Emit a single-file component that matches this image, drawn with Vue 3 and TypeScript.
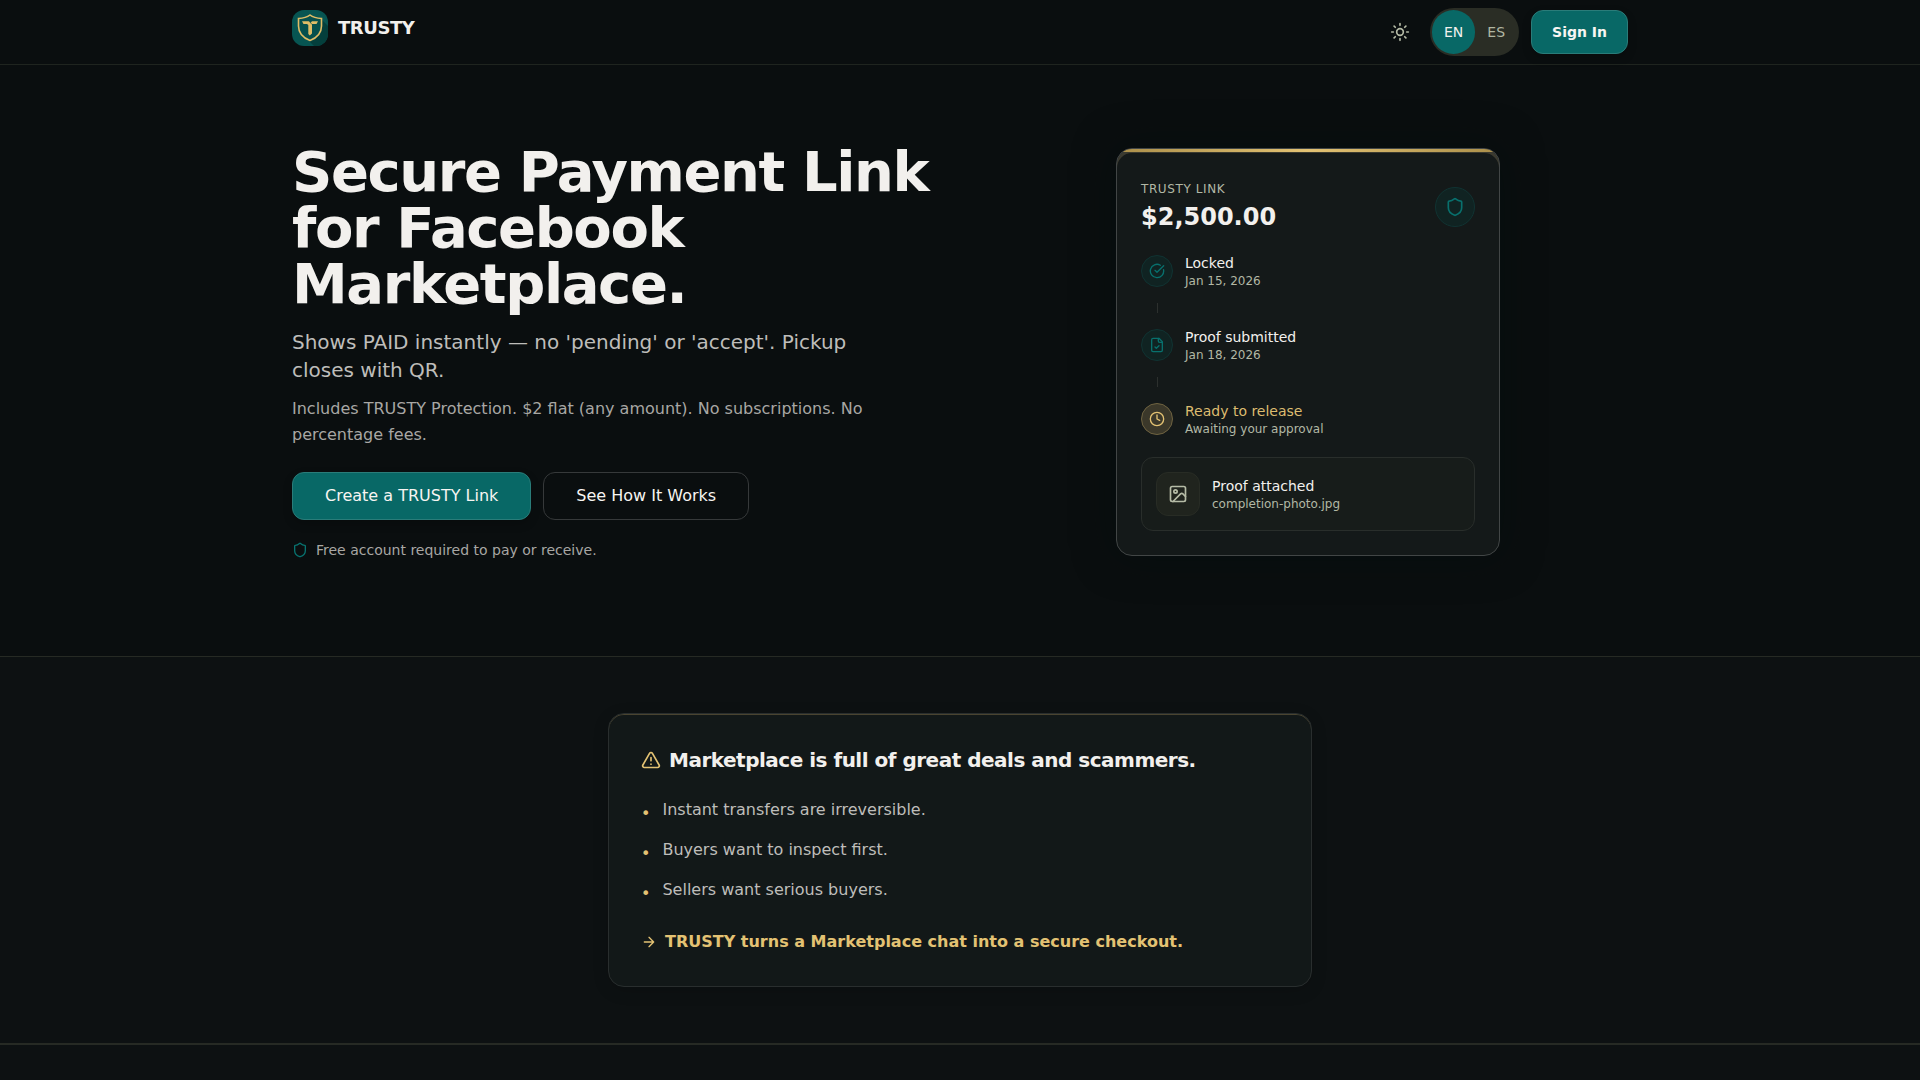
<script setup lang="ts">
import { ref } from 'vue'

type StepIcon = 'check' | 'file' | 'clock'

interface Step {
  title: string
  detail: string
  icon: StepIcon
  active?: boolean
}

const locale = ref<'EN' | 'ES'>('EN')
const locales = ['EN', 'ES'] as const

const steps: Step[] = [
  { title: 'Locked', detail: 'Jan 15, 2026', icon: 'check' },
  { title: 'Proof submitted', detail: 'Jan 18, 2026', icon: 'file' },
  { title: 'Ready to release', detail: 'Awaiting your approval', icon: 'clock', active: true },
]

const problems: string[] = [
  'Instant transfers are irreversible.',
  'Buyers want to inspect first.',
  'Sellers want serious buyers.',
]
</script>

<template>
  <div class="page">
    <header class="topbar">
      <div class="container topbar-inner">
        <a class="brand" href="#">
          <svg class="logo" viewBox="0 0 36 36" aria-hidden="true">
            <defs>
              <clipPath id="logo-clip"><rect width="36" height="36" rx="12" /></clipPath>
            </defs>
            <g clip-path="url(#logo-clip)">
              <rect width="36" height="36" fill="#075552" />
              <path d="M28 8L36 16V36H22L16 30Z" fill="#043f3c" />
            </g>
            <path d="M18 5C15 7.400 11 8.300 6.500 8.500V16C6.500 23.500 11 27.800 18 30.500C25 27.800 29.500 23.500 29.500 16V8.500C25 8.300 21 7.400 18 5Z" fill="#06504d" stroke="#dfbc66" stroke-width="1.600" />
            <path d="M10 11.200H17.200L18.600 12.700L20 11.200H26L24.500 14H20V23.500L17.800 25.500L16.300 24V15L15 14H11.500Z" fill="#dfbc66" />
            <path d="M17.200 11.200L20 14.500" stroke="#06504d" stroke-width="0.700" />
          </svg>
          <span>TRUSTY</span>
        </a>
        <div class="actions">
          <button class="theme" type="button" aria-label="Toggle theme">
            <svg class="icon i20" viewBox="0 0 24 24">
              <circle cx="12" cy="12" r="4" />
              <path d="M12 2v2M12 20v2M4.930 4.930l1.410 1.410M17.660 17.660l1.410 1.410M2 12h2M20 12h2M6.340 17.660l-1.410 1.410M19.070 4.930l-1.410 1.410" />
            </svg>
          </button>
          <div class="lang" role="group" aria-label="Language">
            <button
              v-for="code in locales"
              :key="code"
              type="button"
              :class="{ on: locale === code }"
              @click="locale = code"
            >{{ code }}</button>
          </div>
          <button class="btn primary small" type="button">Sign In</button>
        </div>
      </div>
    </header>

    <main>
      <section class="hero">
        <div class="container hero-grid">
          <div class="copy">
            <h1>Secure Payment Link for Facebook Marketplace.</h1>
            <p class="lead">Shows PAID instantly — no 'pending' or 'accept'. Pickup closes with QR.</p>
            <p class="terms">Includes TRUSTY Protection. $2 flat (any amount). No subscriptions. No percentage fees.</p>
            <div class="cta-row">
              <button class="btn primary" type="button">Create a TRUSTY Link</button>
              <button class="btn outline" type="button">See How It Works</button>
            </div>
            <p class="note">
              <svg class="icon i16" viewBox="0 0 24 24" aria-hidden="true">
                <path d="M20 13c0 5-3.500 7.500-7.660 8.950a1 1 0 0 1-.670-.010C7.500 20.500 4 18 4 13V6a1 1 0 0 1 1-1c2 0 4.500-1.200 6.240-2.720a1.170 1.170 0 0 1 1.520 0C14.510 3.810 17 5 19 5a1 1 0 0 1 1 1z" />
              </svg>
              <span>Free account required to pay or receive.</span>
            </p>
          </div>

          <article class="link-card">
            <header class="link-head">
              <div>
                <p class="label">TRUSTY LINK</p>
                <p class="amount">$2,500.00</p>
              </div>
              <span class="seal">
                <svg class="icon i20" viewBox="0 0 24 24" aria-hidden="true">
                  <path d="M20 13c0 5-3.500 7.500-7.660 8.950a1 1 0 0 1-.670-.010C7.500 20.500 4 18 4 13V6a1 1 0 0 1 1-1c2 0 4.500-1.200 6.240-2.720a1.170 1.170 0 0 1 1.520 0C14.510 3.810 17 5 19 5a1 1 0 0 1 1 1z" />
                </svg>
              </span>
            </header>
            <ol class="steps">
              <li v-for="step in steps" :key="step.title" class="step" :class="{ active: step.active }">
                <span class="dot">
                  <svg class="icon i16" viewBox="0 0 24 24" aria-hidden="true">
                    <template v-if="step.icon === 'check'">
                      <path d="M21.801 10A10 10 0 1 1 17 3.335" />
                      <path d="m9 11 3 3L22 4" />
                    </template>
                    <template v-else-if="step.icon === 'file'">
                      <path d="M15 2H6a2 2 0 0 0-2 2v16a2 2 0 0 0 2 2h12a2 2 0 0 0 2-2V7Z" />
                      <path d="M14 2v4a2 2 0 0 0 2 2h4" />
                      <path d="m9 15 2 2 4-4" />
                    </template>
                    <template v-else>
                      <circle cx="12" cy="12" r="10" />
                      <path d="M12 6v6l4 2" />
                    </template>
                  </svg>
                </span>
                <div class="pair">
                  <p class="title">{{ step.title }}</p>
                  <p class="detail">{{ step.detail }}</p>
                </div>
              </li>
            </ol>
            <div class="proof">
              <span class="thumb">
                <svg class="icon i20" viewBox="0 0 24 24" aria-hidden="true">
                  <rect x="3" y="3" width="18" height="18" rx="2" />
                  <circle cx="9" cy="9" r="2" />
                  <path d="m21 15-3.086-3.086a2 2 0 0 0-2.828 0L6 21" />
                </svg>
              </span>
              <div class="pair">
                <p class="title">Proof attached</p>
                <p class="detail">completion-photo.jpg</p>
              </div>
            </div>
          </article>
        </div>
      </section>

      <section class="problem">
        <article class="problem-card">
          <h2>
            <svg class="icon i20" viewBox="0 0 24 24" aria-hidden="true">
              <path d="m21.730 18-8-14a2 2 0 0 0-3.480 0l-8 14A2 2 0 0 0 4 21h16a2 2 0 0 0 1.730-3" />
              <path d="M12 9v4M12 17h.010" />
            </svg>
            <span>Marketplace is full of great deals and scammers.</span>
          </h2>
          <ul>
            <li v-for="problem in problems" :key="problem">
              <span class="bullet" aria-hidden="true">•</span>
              <span>{{ problem }}</span>
            </li>
          </ul>
          <p class="answer">
            <svg class="icon i16" viewBox="0 0 24 24" aria-hidden="true">
              <path d="M5 12h14M12 5l7 7-7 7" />
            </svg>
            <span>TRUSTY turns a Marketplace chat into a secure checkout.</span>
          </p>
        </article>
      </section>
      <section class="next"></section>
    </main>
  </div>
</template>

<style>
html,
body {
  background: #0d1112;
}
body {
  margin: 0;
  overflow-x: hidden;
}
</style>

<style scoped>
.page {
  display: flex;
  flex-direction: column;
  min-height: 100vh;
  box-sizing: border-box;
  font-family: "DejaVu Sans", sans-serif;
  font-size: 16px;
  color: #f2f0ed;
  background: #0a0e0f;
}
.page *,
.page *::before {
  box-sizing: border-box;
}
h1,
h2,
p,
ul,
ol {
  margin: 0;
  padding: 0;
}
ul,
ol {
  list-style: none;
}
button {
  font-family: inherit;
  cursor: pointer;
}
main {
  display: flex;
  flex-direction: column;
  flex: 1;
}
.container {
  width: 100%;
  max-width: 1400px;
  margin: 0 auto;
  padding: 0 32px;
}
.icon {
  display: block;
  flex: none;
  fill: none;
  stroke: currentColor;
  stroke-width: 2;
  stroke-linecap: round;
  stroke-linejoin: round;
}
.i16 {
  width: 16px;
  height: 16px;
}
.i20 {
  width: 20px;
  height: 20px;
}

.topbar {
  border-bottom: 1px solid #1f241f;
}
.topbar-inner {
  display: flex;
  align-items: center;
  justify-content: space-between;
  min-height: 64px;
}
.brand {
  display: flex;
  align-items: center;
  gap: 10px;
  padding-bottom: 8px;
  color: inherit;
  font-size: 18px;
  font-weight: 700;
  line-height: 28px;
  letter-spacing: -0.025em;
  text-decoration: none;
}
.logo {
  display: block;
  width: 36px;
  height: 36px;
}
.actions {
  display: flex;
  align-items: center;
  gap: 12px;
}
.theme {
  display: grid;
  place-items: center;
  width: 36px;
  height: 36px;
  padding: 0;
  border: 0;
  color: #b5bba6;
  background: none;
}
.lang {
  display: flex;
  padding: 2px;
  border-radius: 24px;
  background: #2a2d25;
}
.lang button {
  height: 44px;
  padding: 0 12px;
  border: 0;
  border-radius: 22px;
  color: #b0b6a2;
  background: none;
  font-size: 14px;
}
.lang button.on {
  color: #f2f0ed;
  background: #086866;
}

.btn {
  height: 48px;
  padding: 0 32px 2px;
  border: 1px solid;
  border-radius: 12px;
  font-size: 16px;
  color: #f7f5f2;
}
.btn.primary {
  border-color: #2a7c79;
  background: #086866;
  box-shadow: 0 4px 10px rgba(0, 0, 0, 0.2);
}
.btn.outline {
  border-color: #36393a;
  background: transparent;
}
.btn.small {
  height: 44px;
  padding: 0 20px;
  font-size: 14px;
  font-weight: 700;
}

.hero {
  padding: 79px 0 96px;
  border-bottom: 1px solid #262a24;
}
.hero-grid {
  display: grid;
  grid-template-columns: 1fr 1fr;
  align-items: center;
  gap: 56px;
}
h1 {
  font-size: 56px;
  line-height: 56px;
  font-weight: 700;
  letter-spacing: -0.025em;
}
.lead {
  max-width: 600px;
  margin-top: 16px;
  font-size: 20px;
  line-height: 28px;
  color: #bebdba;
}
.terms {
  max-width: 600px;
  margin-top: 12px;
  line-height: 26px;
  color: #a8a7a4;
}
.cta-row {
  display: flex;
  flex-wrap: wrap;
  gap: 12px;
  margin-top: 24px;
}
.note {
  display: flex;
  align-items: center;
  gap: 8px;
  margin-top: 20px;
  font-size: 14px;
  line-height: 20px;
  color: #a8a7a4;
}
.note .icon {
  color: #087370;
}

.link-card {
  position: relative;
  justify-self: center;
  width: 100%;
  max-width: 384px;
  padding: 32px 24px 24px;
  overflow: hidden;
  border: 1px solid #424646;
  border-radius: 16px;
  background: #141919;
  box-shadow: 0 0 40px rgba(2, 14, 14, 0.5), inset 0 4px 0 #3b3a2f;
}
.link-card::before {
  content: "";
  position: absolute;
  inset: 0 0 auto;
  height: 3px;
  background: linear-gradient(90deg, #ab8f4a, #e3c273, #ab8f4a);
}
.link-head {
  display: flex;
  align-items: center;
  justify-content: space-between;
}
.label {
  font-size: 12px;
  line-height: 16px;
  letter-spacing: 0.05em;
  color: #b2b8a5;
}
.amount {
  margin-top: 4px;
  font-size: 24px;
  line-height: 32px;
  font-weight: 700;
}
.seal,
.dot,
.thumb {
  display: grid;
  place-items: center;
  flex: none;
  border: 1px solid #103332;
  border-radius: 50%;
  color: #08706d;
  background: #102322;
}
.seal {
  width: 40px;
  height: 40px;
}
.steps {
  display: flex;
  flex-direction: column;
  margin-top: 20px;
}
.step {
  display: flex;
  align-items: center;
  gap: 0 12px;
}
.step + .step {
  flex-wrap: wrap;
}
.step + .step::before {
  content: "";
  width: 1px;
  height: 10px;
  margin: 14px calc(100% - 17px) 14px 16px;
  background: #2c302e;
}
.dot {
  width: 32px;
  height: 32px;
}
.step.active .dot {
  border-color: #6f6341;
  color: #e3c273;
  background: #3b382a;
}
.step.active .title {
  color: #dcbc70;
}
.title {
  font-size: 14px;
  line-height: 20px;
}
.detail {
  font-size: 12px;
  line-height: 16px;
  color: #b2b8a5;
}
.proof {
  display: flex;
  align-items: center;
  gap: 12px;
  margin-top: 20px;
  padding: 14px;
  border: 1px solid #292e2b;
  border-radius: 12px;
  background: #171c1a;
}
.thumb {
  width: 44px;
  height: 44px;
  border-color: #282c25;
  border-radius: 12px;
  color: #b5bba6;
  background: #20241e;
}

.problem {
  padding: 56px 32px;
  border-bottom: 1px solid #262a24;
  background: #0d1112;
}
.problem-card {
  max-width: 704px;
  margin: 0 auto;
  padding: 32px;
  border: 1px solid #292e2e;
  border-radius: 16px;
  background: #121818;
  box-shadow: 0 4px 16px rgba(0, 0, 0, 0.15), inset 0 1px 0 #4a4430;
}
h2 {
  display: flex;
  align-items: center;
  gap: 8px;
  font-size: 20px;
  line-height: 28px;
  font-weight: 700;
  letter-spacing: -0.025em;
}
h2 .icon {
  color: #e3c273;
}
ul {
  display: flex;
  flex-direction: column;
  gap: 12px;
  margin-top: 24px;
}
ul li {
  display: flex;
  align-items: flex-start;
  gap: 12px;
  line-height: 24px;
  color: #bebdba;
}
.bullet {
  margin-top: 4px;
  color: #e3c273;
}
.answer {
  display: flex;
  align-items: center;
  gap: 8px;
  margin-top: 24px;
  line-height: 24px;
  font-weight: 700;
  color: #e3c273;
}
.next {
  flex: 1;
  border-top: 1px solid #262a24;
  background: #0d1112;
}
</style>
